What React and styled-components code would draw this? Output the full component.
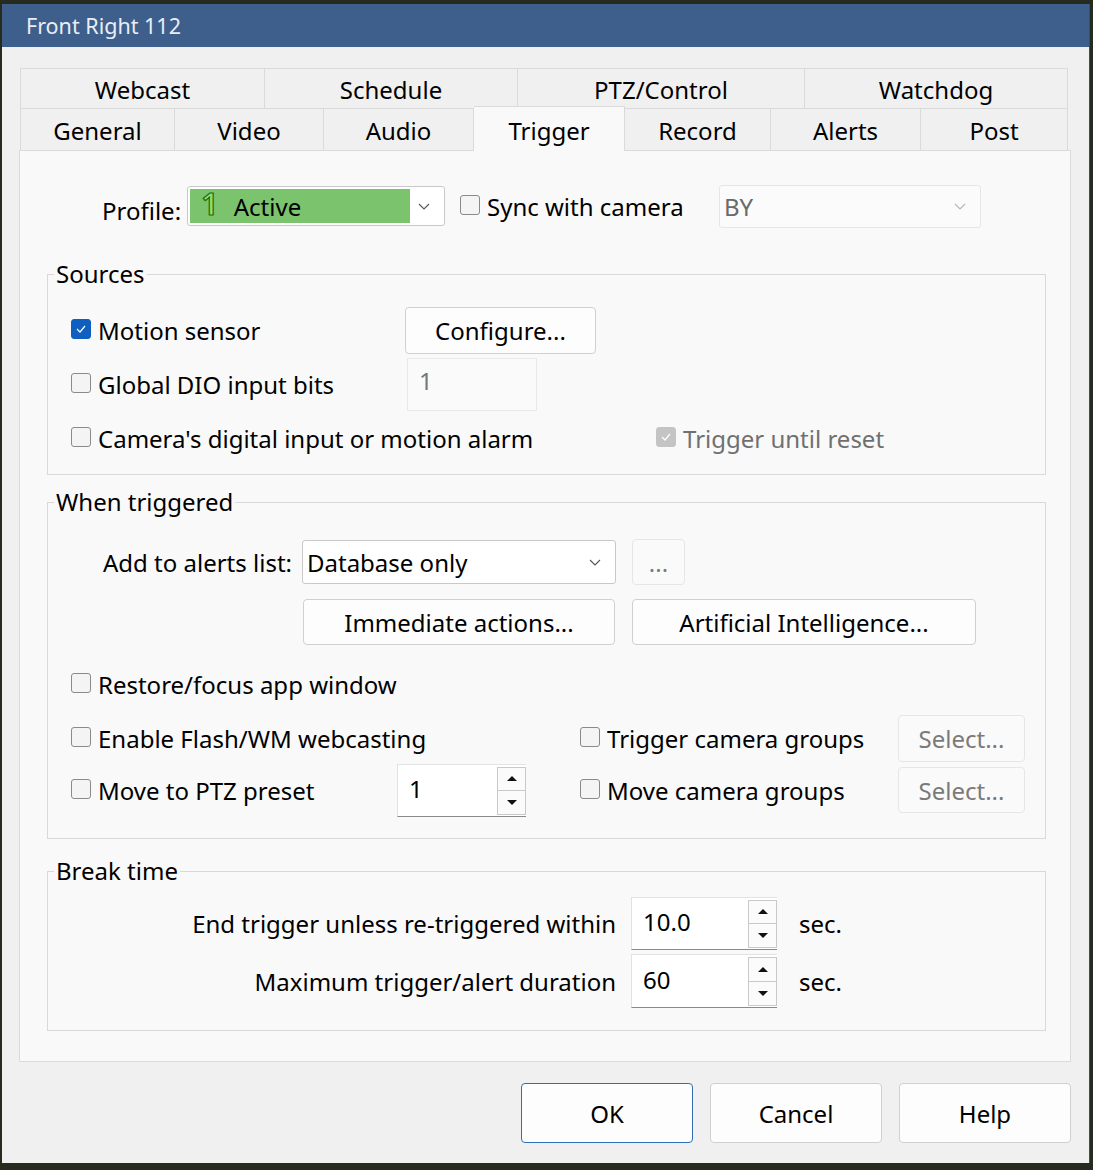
import React from 'react';
import styled, { createGlobalStyle } from 'styled-components';

const GlobalStyle = createGlobalStyle`
  html, body {
    margin: 0;
    padding: 0;
  }
  body {
    background: #262b20;
    font-family: "Noto Sans", "Open Sans", sans-serif;
    font-size: 24px;
    color: #000;
    width: 1093px;
    height: 1170px;
    overflow: hidden;
  }
`;

const Desktop = styled.div`
  padding: 4px 0 0 2px;
  height: 1170px;
  box-sizing: border-box;
`;

const Window = styled.div`
  width: 1087px;
  height: 1159px;
  background: #f0f0f0;
  box-shadow: 1px 0 0 #3a4d6e;
  display: flex;
  flex-direction: column;
`;

const TitleBar = styled.div`
  height: 43px;
  flex: 0 0 43px;
  background: #3e5f8b;
  color: #e9eef5;
  font-size: 21.5px;
  display: flex;
  align-items: center;
  padding-left: 24px;
`;

const Body = styled.div`
  padding: 21px 18px 0 17px;
  display: flex;
  flex-direction: column;
`;

const TabRow = styled.div`
  display: flex;
  height: ${p => p.$h}px;
  margin-left: 1px;
`;

const Tab = styled.div`
  flex: 0 0 ${p => p.$w}px;
  box-sizing: border-box;
  display: flex;
  align-items: center;
  justify-content: center;
  padding-top: 2px;
  background: ${p => (p.$active ? '#f9f9f9' : '#f0f0f0')};
  border-top: 1px solid #dadada;
  border-right: 1px solid #dadada;
  border-left: ${p => (p.$first ? '1px solid #dadada' : 'none')};
  ${p =>
    p.$active &&
    `
    margin-top: -2px;
    margin-bottom: -1px;
    position: relative;
    z-index: 1;
  `}
`;

const Page = styled.div`
  height: 912px;
  box-sizing: border-box;
  background: #f9f9f9;
  border: 1px solid #dadada;
  padding-top: 30px;
`;

const ProfileRow = styled.div`
  display: flex;
  align-items: center;
  height: 50px;
  padding-left: 82px;
  margin-bottom: 28px;
`;

const FieldLabel = styled.span`
  width: ${p => p.$w}px;
  flex: 0 0 ${p => p.$w}px;
  padding-top: 9px;
`;

const Combo = styled.div`
  box-sizing: border-box;
  width: ${p => p.$w}px;
  height: ${p => p.$h}px;
  border: 1px solid ${p => (p.$disabled ? '#e6e6e6' : '#c9c9c9')};
  border-radius: 3px;
  background: ${p => (p.$disabled ? '#fbfbfb' : '#ffffff')};
  color: ${p => (p.$disabled ? '#6a6a6a' : '#000')};
  display: flex;
  align-items: center;
  padding: 2px 14px 2px ${p => p.$pad || 2}px;
  gap: 8px;
`;

const ComboValue = styled.div`
  flex: 1;
  align-self: stretch;
  display: flex;
  align-items: center;
  background: ${p => p.$bg || 'transparent'};
  padding-left: ${p => p.$pad || 0}px;
`;

const LevelDigit = styled.span`
  font-size: 31px;
  font-weight: 600;
  line-height: 1;
  color: #8ee06a;
  -webkit-text-stroke: 1.2px #1d6a12;
  margin-right: 15px;
  margin-top: -5px;
`;

const Chevron = ({ color = '#555' }) => (
  <svg width="12" height="7" viewBox="0 0 12 7">
    <polyline points="1,1 6,6 11,1" fill="none" stroke={color} strokeWidth="1.1" />
  </svg>
);

const CheckLabel = styled.label`
  display: flex;
  align-items: center;
  gap: 7px;
  white-space: nowrap;
  color: ${p => (p.$disabled ? '#707070' : '#000')};
  ${p => p.$w && `width: ${p.$w}px; flex: 0 0 ${p.$w}px;`}
`;

const Box = styled.span`
  box-sizing: border-box;
  width: 20px;
  height: 20px;
  flex: 0 0 20px;
  border-radius: 3px;
  margin-top: -2px;
  border: 1px solid ${p => (p.$checked ? (p.$disabled ? '#c4c4c4' : '#0f5fc0') : '#8a8a8a')};
  background: ${p => (p.$checked ? (p.$disabled ? '#c4c4c4' : '#0f5fc0') : '#f4f4f4')};
  display: flex;
  align-items: center;
  justify-content: center;
`;

const Check = ({ checked, disabled, children, w }) => (
  <CheckLabel $disabled={disabled} $w={w}>
    <Box $checked={checked} $disabled={disabled}>
      {checked && (
        <svg width="12" height="10" viewBox="0 0 12 10">
          <polyline points="2,5 5,8 10,2" fill="none" stroke="#fff" strokeWidth="1.2" />
        </svg>
      )}
    </Box>
    {children}
  </CheckLabel>
);

const Group = styled.fieldset`
  margin: 0 24px ${p => p.$mb || 0}px 27px;
  padding: ${p => p.$pt}px 0 ${p => p.$pb}px 23px;
  border: 1px solid #d9d9d9;
  min-width: 0;
`;

const Legend = styled.legend`
  margin-left: -17px;
  padding: 0 2px;
  line-height: 30px;
  height: 30px;
`;

const SourceGrid = styled.div`
  display: grid;
  grid-template-columns: 334px 251px 1fr;
  grid-auto-rows: 54px;
  align-items: center;
`;

const Span2 = styled.div`
  grid-column: 1 / span 2;
`;

const Button = styled.div`
  box-sizing: border-box;
  width: ${p => p.$w}px;
  height: ${p => p.$h}px;
  display: flex;
  align-items: center;
  justify-content: center;
  border-radius: 4px;
  border: 1px solid ${p => (p.$primary ? '#2f6fb3' : p.$disabled ? '#e6e6e6' : '#d0d0d0')};
  background: ${p => (p.$disabled ? '#fafafa' : '#fdfdfd')};
  color: ${p => (p.$disabled ? '#7a7a7a' : '#000')};
  margin-left: ${p => p.$ml || 0}px;
`;

const TextBox = styled.div`
  box-sizing: border-box;
  width: ${p => p.$w}px;
  height: ${p => p.$h}px;
  margin-left: 2px;
  border: 1px solid #e8e8e8;
  background: #fafafa;
  color: #777;
  padding: 5px 0 0 11px;
`;

const Row = styled.div`
  height: ${p => p.$h}px;
  display: flex;
  align-items: center;
  padding-left: ${p => p.$pl || 0}px;
  gap: ${p => p.$gap || 0}px;
`;

const RightLabel = styled.span`
  width: ${p => p.$w}px;
  flex: 0 0 ${p => p.$w}px;
  text-align: right;
  padding-right: 10px;
  box-sizing: border-box;
  white-space: nowrap;
`;

const OptionGrid = styled.div`
  display: grid;
  grid-template-columns: 326px 183px 318px 127px;
  grid-auto-rows: 52px;
  align-items: center;
`;

const BreakGrid = styled.div`
  display: grid;
  grid-template-columns: 545px 146px auto;
  column-gap: 15px;
  grid-auto-rows: 58px;
  align-items: center;
`;

const EndText = styled.span`
  text-align: right;
  white-space: nowrap;
`;

const Unit = styled.span`
  padding-left: 7px;
`;

const SpinWrap = styled.div`
  box-sizing: border-box;
  width: ${p => p.$w}px;
  height: ${p => p.$h}px;
  display: flex;
  background: #fff;
  border-top: 1px solid #e2e2e2;
  border-left: 1px solid #e2e2e2;
  border-bottom: 1px solid #8a8a8a;
`;

const SpinText = styled.div`
  flex: 1;
  padding: 0 0 4px 11px;
  display: flex;
  align-items: center;
`;

const SpinButtons = styled.div`
  width: 29px;
  display: flex;
  flex-direction: column;
  padding: 2px 0 1px;
  box-sizing: border-box;
`;

const SpinBtn = styled.div`
  flex: 1;
  border: 1px solid #c9c9c9;
  margin-top: ${p => (p.$down ? '-1px' : '0')};
  background: #fbfbfb;
  display: flex;
  align-items: center;
  justify-content: center;
  &::after {
    content: "";
    border-left: 5px solid transparent;
    border-right: 5px solid transparent;
    ${p => (p.$down ? 'border-top: 5px solid #111;' : 'border-bottom: 5px solid #111;')}
  }
`;

const Spinner = ({ value, w, h }) => (
  <SpinWrap $w={w} $h={h}>
    <SpinText>{value}</SpinText>
    <SpinButtons>
      <SpinBtn />
      <SpinBtn $down />
    </SpinButtons>
  </SpinWrap>
);

const Footer = styled.div`
  display: flex;
  justify-content: flex-end;
  gap: 17px;
  padding-top: 21px;
`;

const row1 = [
  ['Webcast', 245],
  ['Schedule', 253],
  ['PTZ/Control', 287],
  ['Watchdog', 263],
];

const row2 = [
  ['General', 155],
  ['Video', 149],
  ['Audio', 150],
  ['Trigger', 151],
  ['Record', 146],
  ['Alerts', 150],
  ['Post', 147],
];

export default function App() {
  return (
    <>
      <GlobalStyle />
      <Desktop>
        <Window>
          <TitleBar>Front Right 112</TitleBar>
          <Body>
            <TabRow $h={40}>
              {row1.map(([name, w], i) => (
                <Tab key={name} $w={w} $first={i === 0}>{name}</Tab>
              ))}
            </TabRow>
            <TabRow $h={42}>
              {row2.map(([name, w], i) => (
                <Tab key={name} $w={w} $first={i === 0} $active={name === 'Trigger'}>{name}</Tab>
              ))}
            </TabRow>
            <Page>
              <ProfileRow>
                <FieldLabel $w={85}>Profile:</FieldLabel>
                <Combo $w={258} $h={40}>
                  <ComboValue $bg="#7cc36e" $pad={11}>
                    <LevelDigit>1</LevelDigit>
                    Active
                  </ComboValue>
                  <Chevron />
                </Combo>
                <Row $h={50} $pl={15}>
                  <Check w={259}>Sync with camera</Check>
                </Row>
                <Combo $w={262} $h={43} $disabled $pad={4}>
                  <ComboValue>BY</ComboValue>
                  <Chevron color="#b5b5b5" />
                </Combo>
              </ProfileRow>

              <Group $pt={14} $pb={9} $mb={12}>
                <Legend>Sources</Legend>
                <SourceGrid>
                  <Check checked>Motion sensor</Check>
                  <Button $w={191} $h={47}>Configure...</Button>
                  <div />
                  <Check>Global DIO input bits</Check>
                  <TextBox $w={130} $h={53}>1</TextBox>
                  <div />
                  <Span2>
                    <Check>Camera's digital input or motion alarm</Check>
                  </Span2>
                  <Check checked disabled>Trigger until reset</Check>
                </SourceGrid>
              </Group>

              <Group $pt={19} $pb={22} $mb={17}>
                <Legend>When triggered</Legend>
                <Row $h={52}>
                  <RightLabel $w={231}>Add to alerts list:</RightLabel>
                  <Combo $w={314} $h={44} $pad={4}>
                    <ComboValue>Database only</ComboValue>
                    <Chevron />
                  </Combo>
                  <Button $w={53} $h={46} $ml={16} $disabled>...</Button>
                </Row>
                <Row $h={68} $pl={232} $gap={17}>
                  <Button $w={312} $h={46}>Immediate actions...</Button>
                  <Button $w={344} $h={46}>Artificial Intelligence...</Button>
                </Row>
                <Row $h={56}>
                  <Check>Restore/focus app window</Check>
                </Row>
                <OptionGrid>
                  <Check>Enable Flash/WM webcasting</Check>
                  <div />
                  <Check>Trigger camera groups</Check>
                  <Button $w={127} $h={47} $disabled>Select...</Button>
                  <Check>Move to PTZ preset</Check>
                  <Spinner value="1" w={129} h={53} />
                  <Check>Move camera groups</Check>
                  <Button $w={127} $h={46} $disabled>Select...</Button>
                </OptionGrid>
              </Group>

              <Group $pt={8} $pb={20}>
                <Legend>Break time</Legend>
                <BreakGrid>
                  <EndText>End trigger unless re-triggered within</EndText>
                  <Spinner value="10.0" w={146} h={53} />
                  <Unit>sec.</Unit>
                  <EndText>Maximum trigger/alert duration</EndText>
                  <Spinner value="60" w={146} h={54} />
                  <Unit>sec.</Unit>
                </BreakGrid>
              </Group>
            </Page>
            <Footer>
              <Button $w={172} $h={60} $primary>OK</Button>
              <Button $w={172} $h={60}>Cancel</Button>
              <Button $w={172} $h={60}>Help</Button>
            </Footer>
          </Body>
        </Window>
      </Desktop>
    </>
  );
}
